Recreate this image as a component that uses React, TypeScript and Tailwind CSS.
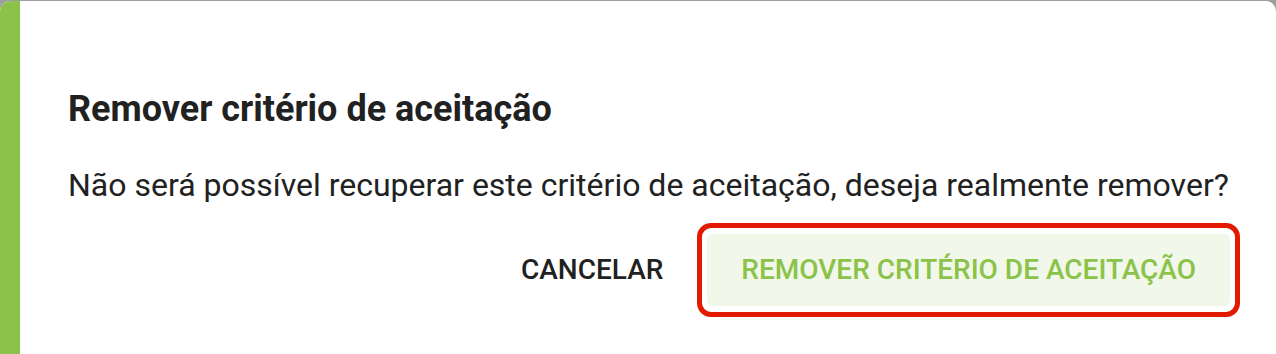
export default function App() {
  return (
    <div className="h-[354px] w-[1276px] overflow-hidden bg-[#9e9e9e] pt-px font-['Roboto','Liberation_Sans',sans-serif]">
      <div className="flex h-[363px] overflow-hidden rounded-[10px] bg-white">
        <div className="w-[20px] shrink-0 bg-[#8bc34a]" />
        <div className="flex flex-1 flex-col pl-[48px] pr-[36px]">
          <h2 className="mt-[86px] text-[36px] font-bold leading-[44px] text-[#212121]">
            Remover critério de aceitação
          </h2>
          <p className="mt-[34px] text-[32px] leading-[40px] text-[#212121]">
            Não será possível recuperar este critério de aceitação, deseja realmente remover?
          </p>
          <div className="mt-[18px] flex items-center justify-end gap-[34px]">
            <button className="text-[28px] font-medium uppercase text-[#212121]">
              Cancelar
            </button>
            <div className="rounded-[14px] border-[5px] border-[#e21a00] px-[5px] py-[6px]">
              <button className="flex h-[72px] items-center rounded-[6px] bg-[#f1f8e9] px-[34px] text-[28px] font-medium uppercase text-[#8bc34a]">
                Remover critério de aceitação
              </button>
            </div>
          </div>
        </div>
      </div>
    </div>
  );
}
